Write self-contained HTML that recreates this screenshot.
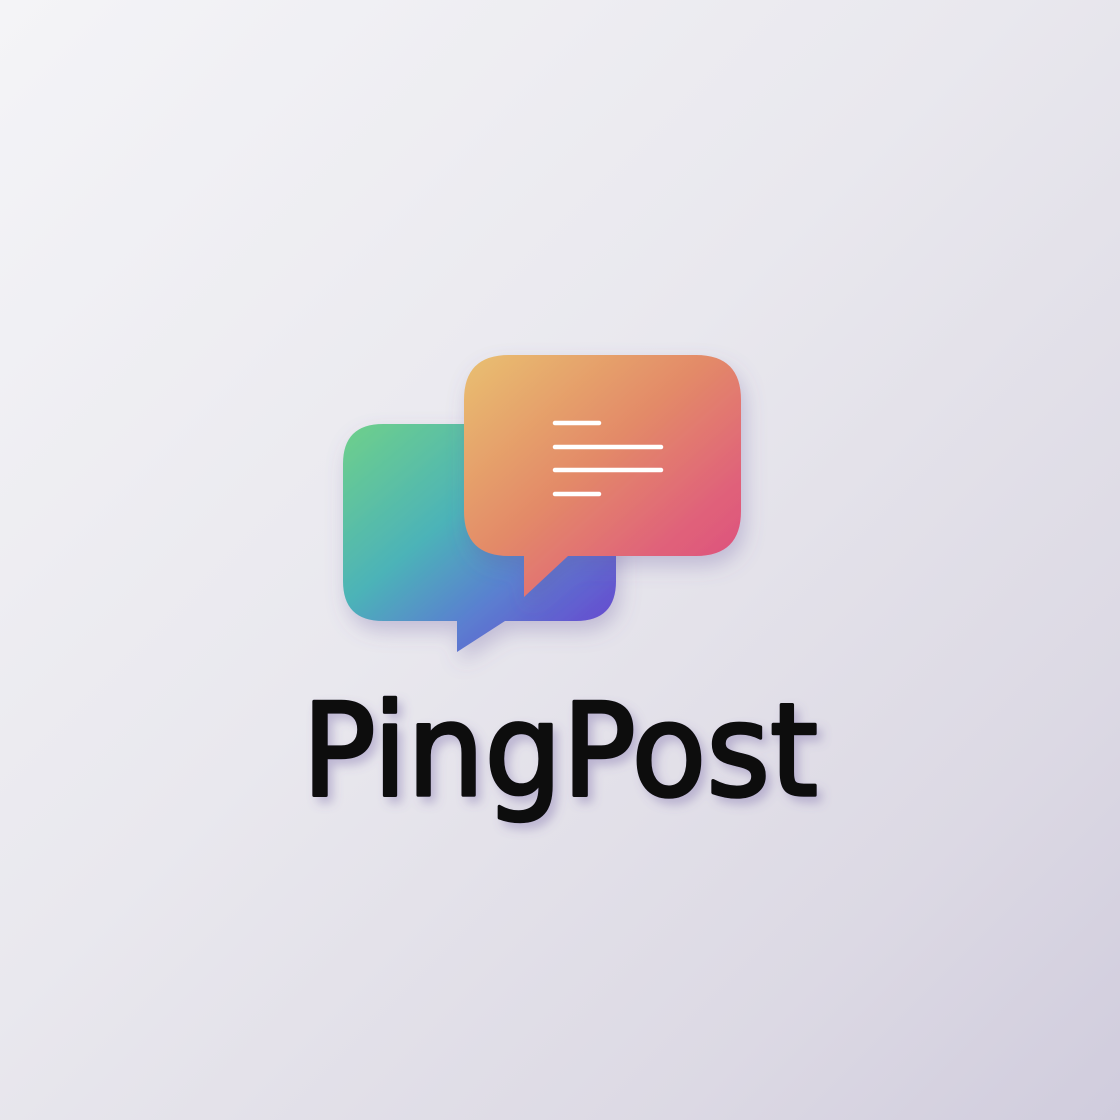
<!DOCTYPE html>
<html><head><style>
html,body{margin:0;padding:0}
body{width:1120px;height:1120px;overflow:hidden;background:linear-gradient(135deg,#f4f4f7 0%,#e9e8ee 45%,#dcd9e4 80%,#d0ccdd 100%)}
</style></head><body>
<svg width="1120" height="1120" viewBox="0 0 1120 1120" style="position:absolute;left:0;top:0">
<defs>
<linearGradient id="g1" x1="0" y1="0" x2="1" y2="1">
<stop offset="0" stop-color="#6fd08a"/><stop offset="0.4" stop-color="#4cb3b8"/><stop offset="0.65" stop-color="#5a80d0"/><stop offset="1" stop-color="#6a3ccf"/></linearGradient>
<linearGradient id="g2" x1="0" y1="0" x2="1" y2="1">
<stop offset="0" stop-color="#e9c070"/><stop offset="0.45" stop-color="#e38a68"/><stop offset="0.75" stop-color="#e0627a"/><stop offset="1" stop-color="#dc4a7c"/></linearGradient>
<filter id="sh" x="-20%" y="-20%" width="140%" height="150%"><feDropShadow dx="4" dy="10" stdDeviation="10" flood-color="#6a5aa0" flood-opacity="0.3"/></filter>
<filter id="ts" x="-10%" y="-20%" width="130%" height="160%"><feDropShadow dx="5" dy="6" stdDeviation="5" flood-color="#6a5aa0" flood-opacity="0.35"/></filter>
</defs>
<g filter="url(#sh)">
<path d="M383 424 H576 Q616 424 616 464 V581 Q616 621 576 621 H505 L457 652 V621 H383 Q343 621 343 581 V464 Q343 424 383 424 Z" fill="url(#g1)"/>
</g>
<g filter="url(#sh)">
<path d="M509 355 H696 Q741 355 741 400 V511 Q741 556 696 556 H568 L524 597 V556 H509 Q464 556 464 511 V400 Q464 355 509 355 Z" fill="url(#g2)"/>
</g>
<g stroke="#fff" stroke-width="4.5" stroke-linecap="round">
<line x1="555" y1="423" x2="599" y2="423"/>
<line x1="555" y1="447" x2="661" y2="447"/>
<line x1="555" y1="470" x2="661" y2="470"/>
<line x1="555" y1="494" x2="599" y2="494"/>
</g>
<text x="302" y="795" font-family="DejaVu Sans, sans-serif" font-size="128" fill="#0a0a0a" stroke="#0a0a0a" stroke-width="3.5" stroke-linejoin="round" textLength="516" lengthAdjust="spacingAndGlyphs" filter="url(#ts)">PingPost</text>
</svg>
</body></html>
